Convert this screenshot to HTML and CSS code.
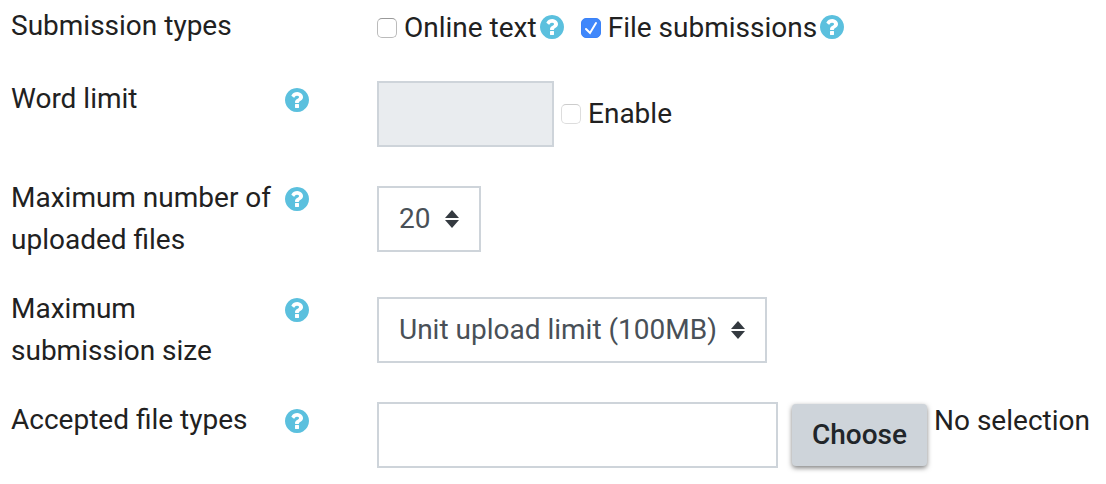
FILE: index.html
```html
<!DOCTYPE html>
<html lang="en">
    <head>
        <title>Submission types</title>
        <meta charset="UTF-8">
        <meta name="viewport" content="width=device-width, initial-scale=1">
        <link rel="stylesheet" href="styles.css">
    </head>
    <body>
        <svg class="sprite" aria-hidden="true">
            <symbol id="question" viewBox="128 128 1536 1536">
                <path d="M1024 1376v-192q0-14-9-23t-23-9h-192q-14 0-23 9t-9 23v192q0 14 9 23t23 9h192q14 0 23-9t9-23zm256-672q0-88-55.5-163t-138.5-116-170-41q-243 0-371 213-15 24 8 42l132 100q7 6 19 6 16 0 25-12 53-68 86-92 34-24 86-24 48 0 85.5 26t37.5 59q0 38-20 61t-68 45q-63 28-115.5 86.5t-52.5 125.5v36q0 14 9 23t23 9h192q14 0 23-9t9-23q0-19 21.5-49.5t54.5-49.5q32-18 49-28.5t46-35 44.5-48 28-60.5 12.5-81zm384 192q0 209-103 385.5t-279.5 279.5-385.5 103-385.5-103-279.5-279.5-103-385.5 103-385.5 279.5-279.5 385.5-103 385.5 103 279.5 279.5 103 385.5z"/>
            </symbol>
        </svg>

        <form class="settings">
            <div class="row" role="group" aria-labelledby="types-label">
                <div class="row-label">
                    <span id="types-label">Submission types</span>
                </div>
                <div class="field checks">
                    <div class="check">
                        <input type="checkbox" id="onlinetext">
                        <label for="onlinetext">Online text</label>
                        <a class="help" href="#"><svg><use href="#question"/></svg></a>
                    </div>
                    <div class="check">
                        <input type="checkbox" id="filesubmissions" checked>
                        <label for="filesubmissions">File submissions</label>
                        <a class="help" href="#"><svg><use href="#question"/></svg></a>
                    </div>
                </div>
            </div>

            <div class="row">
                <div class="row-label">
                    <label for="wordlimit">Word limit</label>
                    <a class="help" href="#"><svg><use href="#question"/></svg></a>
                </div>
                <div class="field inputs">
                    <input type="text" class="text short" id="wordlimit" disabled>
                    <div class="check">
                        <input type="checkbox" class="faded" id="wordlimit-enable">
                        <label for="wordlimit-enable">Enable</label>
                    </div>
                </div>
            </div>

            <div class="row">
                <div class="row-label">
                    <label for="maxfiles">Maximum number of uploaded files</label>
                    <a class="help" href="#"><svg><use href="#question"/></svg></a>
                </div>
                <div class="field selects">
                    <select id="maxfiles">
                        <option>20</option>
                    </select>
                </div>
            </div>

            <div class="row">
                <div class="row-label">
                    <label for="maxsize">Maximum submission size</label>
                    <a class="help" href="#"><svg><use href="#question"/></svg></a>
                </div>
                <div class="field selects">
                    <select id="maxsize">
                        <option>Unit upload limit (100MB)</option>
                    </select>
                </div>
            </div>

            <div class="row">
                <div class="row-label">
                    <label for="filetypes">Accepted file types</label>
                    <a class="help" href="#"><svg><use href="#question"/></svg></a>
                </div>
                <div class="field inputs picker">
                    <input type="text" class="text" id="filetypes">
                    <button type="button">Choose</button>
                    <span class="selection">No selection</span>
                </div>
            </div>
        </form>
    </body>
</html>
```

FILE: styles.css
```css
* {
    box-sizing: border-box;
}
body {
    margin: 0;
    background: #fff;
    color: #212121;
    font-family: Roboto, sans-serif;
    font-size: 28px;
    line-height: 42px;
}
input, select, button {
    margin: 0;
    font: inherit;
}
.sprite {
    display: none;
}
.settings {
    display: grid;
    gap: 27px;
    padding: 5px 11px 12px;
}
.row {
    display: grid;
    grid-template-columns: 298px 1fr;
    column-gap: 68px;
    align-items: start;
}
.row-label {
    display: flex;
    justify-content: space-between;
    gap: 8px;
}
.help {
    flex: none;
    display: flex;
    align-items: center;
    height: 42px;
    color: #5bc0de;
}
.row-label .help {
    padding-top: 2px;
}
.checks .help {
    padding-bottom: 2px;
}
.help svg {
    width: 24px;
    height: 24px;
    fill: currentColor;
}
.field {
    display: flex;
}

/* checkboxes */
.checks {
    gap: 17px;
    padding: 2px 0;
}
.check {
    display: flex;
    align-items: center;
}
.check label {
    padding: 0 3px 0 7px;
}
input[type="checkbox"] {
    appearance: none;
    width: 20px;
    height: 20px;
    border: 1px solid #bbb;
    border-top-color: #999;
    border-radius: 5px;
    background: #fff;
}
input[type="checkbox"]:checked {
    border-color: #3b82f7;
    background: #3f87fb url("data:image/svg+xml,%3Csvg xmlns='http://www.w3.org/2000/svg' viewBox='0 0 18 18'%3E%3Cpath d='M4 10l4 4 6-10' fill='none' stroke='%23fff' stroke-width='2' stroke-linecap='round'/%3E%3C/svg%3E") center / 18px no-repeat;
}
input[type="checkbox"].faded {
    border-color: #ddd;
    border-top-color: #ccc;
}

/* text boxes */
.inputs {
    gap: 7px;
    padding: 3px 0;
}
.text {
    flex: 1;
    min-width: 0;
    height: 66px;
    padding: 10px 20px;
    border: 2px solid #ced4da;
    background: #fff;
    color: #495057;
}
.text.short {
    flex: none;
    width: 177px;
}
.text:disabled {
    background: #e9ecef;
}

/* drop-downs */
.selects {
    padding: 9px 0;
}
select {
    appearance: none;
    height: 66px;
    padding: 0 48px 0 20px;
    border: 2px solid #ced4da;
    border-radius: 0;
    background: #fff url("data:image/svg+xml,%3Csvg xmlns='http://www.w3.org/2000/svg' viewBox='0 0 14 18'%3E%3Cpath d='M7 0l7 8H0zM7 18l7-8H0z' fill='%23343a40'/%3E%3C/svg%3E") right 20px center / 14px 18px no-repeat;
    color: #495057;
}

/* file type picker */
.picker button {
    height: 62px;
    margin: 2px 0 0 7px;
    padding: 0 20px;
    border: 0;
    border-radius: 4px;
    background: #ced4da;
    box-shadow: 0 2px 5px rgba(0, 0, 0, 0.5);
    color: #212529;
    font-weight: 500;
}
.selection {
    margin-right: 6px;
    line-height: 38px;
    white-space: nowrap;
}
```
